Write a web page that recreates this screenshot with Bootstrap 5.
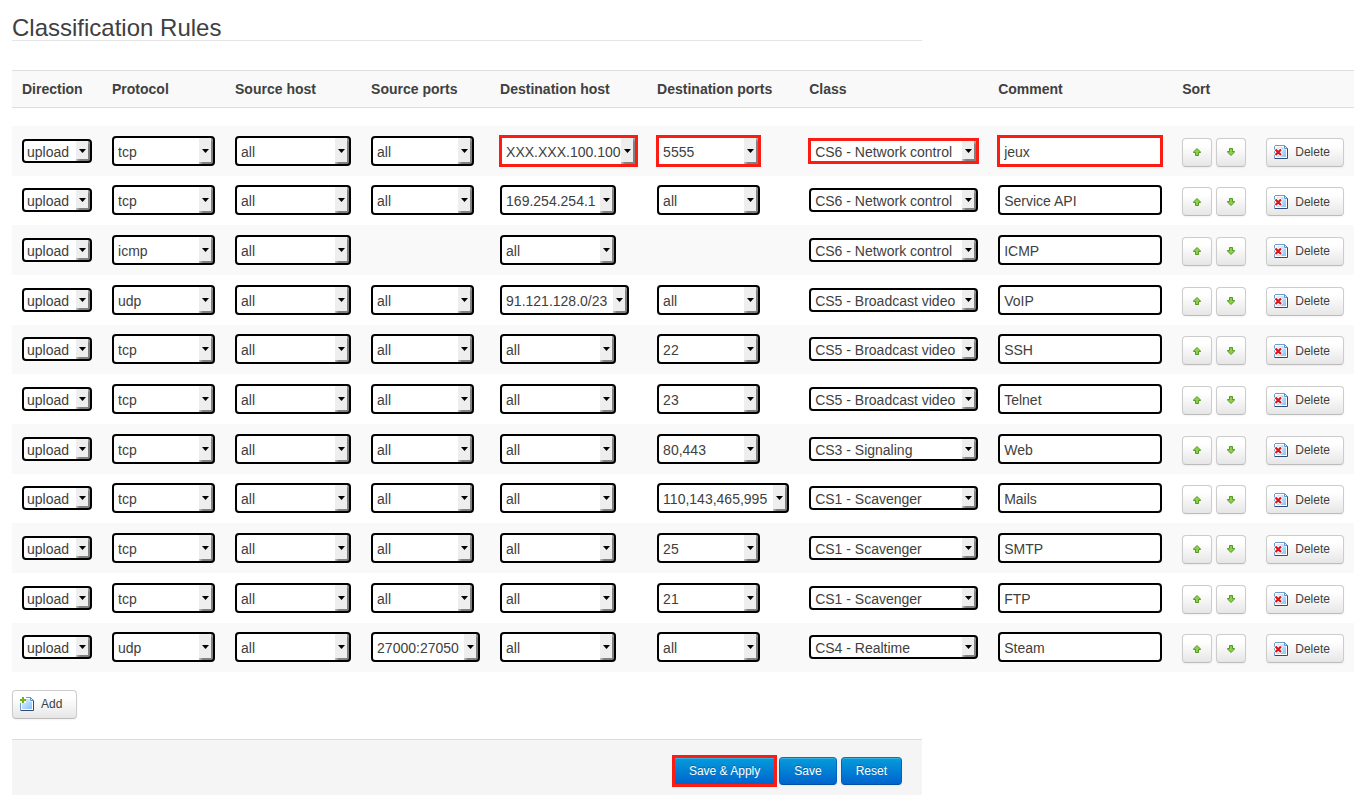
<!DOCTYPE html>
<html lang="en">
<head>
<meta charset="utf-8">
<meta name="viewport" content="width=device-width, initial-scale=1">
<title>Classification Rules</title>
<link href="https://cdn.jsdelivr.net/npm/bootstrap@5.3.0/dist/css/bootstrap.min.css" rel="stylesheet">
<style>
  body { font: 14px/18px "Liberation Sans", Arial, sans-serif; color: #404040; background: #fff; }
  main { padding: 15px 0 0 12px; }
  .section-title { font-size: 24px; line-height: 25px; font-weight: 400; margin-bottom: 29px; padding-top: 1px; margin-top: -1px; border-bottom: 1px solid #e5e5e5; }
  .form-band { max-width: 910px; }

  /* Rules table */
  .rules { font-size: 14px; line-height: 18px; color: #404040; }
  .rules th, .rules td { padding: 0 10px; text-align: left; white-space: nowrap; }
  .rules thead th { height: 37px; background: #f9f9f9; border-top: 1px solid #ddd; border-bottom: 1px solid #ddd; }
  .rules .spacer td { height: 18px; }
  .rules .rule td { height: 50px; vertical-align: middle; }
  .rules .rule:nth-child(3n) td { height: 49px; }
  .rules .rule:nth-child(even) td { background: #f9f9f9; }
  .rules .rule .actions { padding-top: 3px; }

  /* Controls */
  .field { display: block; height: 30px; margin: 0; padding: 2px 4px 0; border: 2px solid #000; border-radius: 4px; color: #404040; background-color: #fff; font: inherit; outline: 0; }
  select.field {
    appearance: none; padding-right: 14px;
    background-image:
      url("data:image/svg+xml,%3Csvg xmlns='http://www.w3.org/2000/svg' width='7' height='4'%3E%3Cpath d='M0 0h7L3.500 4z'/%3E%3C/svg%3E"),
      linear-gradient(#b4b4b4, #808080 4px),
      linear-gradient(to right, #c4c4c4, #808080 4px),
      linear-gradient(#eee, #eee);
    background-size: 7px 4px, 2px 100%, 14px 2px, 14px 100%;
    background-position: right 4px center, right top, right bottom, right top;
    background-repeat: no-repeat;
  }
  .f-dir, .f-class { height: 24px; }
  select.f-dir { width: 70px; padding-left: 3px; }
  .f-class { width: 169px; }
  .f-proto, .f-port { width: 103px; }
  .f-host { width: 116px; }
  .f-comment { width: 164px; }
  .fit-range { width: 109px; }
  .fit-net { width: 129px; }
  .fit-list { width: 132px; }
  .fit-addr { width: 137px; }
  .marked { outline: 3px solid #fb1c14; outline-offset: -2px; border-radius: 0; }

  /* Buttons */
  .btn { --bs-btn-font-size: 12px; --bs-btn-line-height: 18px; --bs-btn-border-radius: 4px; }
  .btn-tool { --bs-btn-color: #404040; --bs-btn-hover-color: #404040; height: 29px; padding: 0 13px 0 7px; gap: 7px; border: 1px solid #ccc; border-bottom-color: #bbb; background: linear-gradient(#fff 25%, #e6e6e6); box-shadow: inset 0 1px 0 #fff, 0 1px 2px rgba(0,0,0,.05); }
  .btn-sort { width: 30px; padding: 0; }
  .btn-add { margin-top: 18px; padding-right: 14px; }
  .btn-act { --bs-btn-color: #fff; --bs-btn-hover-color: #fff; height: 28px; padding: 0 14px; border: 1px solid; border-color: #0078c0 #0064c0 #004fa8; background: linear-gradient(#049cdb, #0064cd); text-shadow: 0 -1px 0 rgba(0,0,0,.25); box-shadow: inset 0 1px 0 rgba(255,255,255,.2), 0 1px 2px rgba(0,0,0,.05); }
  .btn-act.marked { outline-offset: -1px; border-radius: 0; }
  .page-actions { margin-top: 20px; padding: 17px 20px 10px; background: #f5f5f5; border-top: 1px solid #ddd; }
</style>
</head>
<body>
<svg class="position-absolute" width="0" height="0" aria-hidden="true">
  <defs>
    <linearGradient id="sheet" x1="0" y1="0" x2="1" y2="1"><stop offset="0" stop-color="#e4f2ff"/><stop offset="1" stop-color="#86c2fb"/></linearGradient>
  </defs>
  <symbol id="i-page" viewBox="0 0 14 14">
    <path d="M.5.5h10l3 3v10H.5z" fill="#fff"/>
    <path d="M1 .5h9.500M.5 1v12" stroke="#6f9cc9" fill="none"/>
    <path d="M2 2h7.500v2.500H12V12H2z" fill="url(#sheet)"/>
    <path d="M10.500.5v3h3z" stroke="#5c93cd" fill="#dceeff"/>
    <path d="M13.500 3.500v10H.5" stroke="#2f4a78" fill="none"/>
  </symbol>
  <symbol id="i-delete" viewBox="0 0 14 14">
    <use href="#i-page"/>
    <path d="M1 4l6.500 6.500M7.500 4L1 10.500" stroke="#fff" stroke-width="4"/>
    <path d="M1.500 4.500l5.500 5.500M7 4.500L1.500 10" stroke="#dc1414" stroke-width="2.200"/>
  </symbol>
  <symbol id="i-add" viewBox="0 0 14 14">
    <use href="#i-page"/>
    <path d="M0 0h6v6H0z" fill="#fff"/>
    <path d="M3 0v6M0 3h6" stroke="#6eb41e" stroke-width="2"/>
  </symbol>
  <symbol id="i-up" viewBox="0 0 8 8">
    <path d="M4 .5L7.500 4v.5h-2v3h-3v-3h-2V4z" fill="#8fce4a" stroke="#4f9a1f"/>
  </symbol>
</svg>

<main>
  <h1 class="section-title form-band">Classification Rules</h1>

  <form>
    <table class="rules w-100">
      <thead>
        <tr>
          <th scope="col" id="h-dir">Direction</th>
          <th scope="col" id="h-proto">Protocol</th>
          <th scope="col" id="h-shost">Source host</th>
          <th scope="col" id="h-sport">Source ports</th>
          <th scope="col" id="h-dhost">Destination host</th>
          <th scope="col" id="h-dport">Destination ports</th>
          <th scope="col" id="h-class">Class</th>
          <th scope="col" id="h-comment">Comment</th>
          <th scope="col">Sort</th>
          <th></th>
        </tr>
      </thead>
      <tbody id="rules">
        <tr class="spacer"><td colspan="10"></td></tr>
      </tbody>
    </table>

    <button type="button" class="btn btn-tool btn-add d-inline-flex align-items-center" id="add">
      <svg width="14" height="14" aria-hidden="true"><use href="#i-add"/></svg>Add
    </button>

    <div class="page-actions form-band d-flex justify-content-end gap-1">
      <button type="submit" class="btn btn-act marked">Save &amp; Apply</button>
      <button type="submit" class="btn btn-act">Save</button>
      <button type="reset" class="btn btn-act">Reset</button>
    </div>
  </form>
</main>

<script src="https://cdn.jsdelivr.net/npm/bootstrap@5.3.0/dist/js/bootstrap.bundle.min.js"></script>
<script>
  // protocol, source host, source ports, destination host, destination ports, class, comment, highlighted
  const rules = [
    ['tcp', 'all', 'all', 'XXX.XXX.100.100', '5555', 'CS6 - Network control', 'jeux', true],
    ['tcp', 'all', 'all', '169.254.254.1', 'all', 'CS6 - Network control', 'Service API'],
    ['icmp', 'all', null, 'all', null, 'CS6 - Network control', 'ICMP'],
    ['udp', 'all', 'all', '91.121.128.0/23', 'all', 'CS5 - Broadcast video', 'VoIP'],
    ['tcp', 'all', 'all', 'all', '22', 'CS5 - Broadcast video', 'SSH'],
    ['tcp', 'all', 'all', 'all', '23', 'CS5 - Broadcast video', 'Telnet'],
    ['tcp', 'all', 'all', 'all', '80,443', 'CS3 - Signaling', 'Web'],
    ['tcp', 'all', 'all', 'all', '110,143,465,995', 'CS1 - Scavenger', 'Mails'],
    ['tcp', 'all', 'all', 'all', '25', 'CS1 - Scavenger', 'SMTP'],
    ['tcp', 'all', 'all', 'all', '21', 'CS1 - Scavenger', 'FTP'],
    ['udp', 'all', '27000:27050', 'all', 'all', 'CS4 - Realtime', 'Steam']
  ];
  // values too long for the standard control width
  const fit = {
    'XXX.XXX.100.100': 'fit-addr', '91.121.128.0/23': 'fit-net',
    '110,143,465,995': 'fit-list', '27000:27050': 'fit-range'
  };
  const pick = (head, kind, value, mark) => value === null ? '<td></td>' :
    `<td><select class="field ${kind} ${fit[value] || ''} ${mark ? 'marked' : ''}" aria-labelledby="${head}"><option>${value}</option></select></td>`;

  document.getElementById('rules').insertAdjacentHTML('beforeend', rules.map(
    ([proto, shost, sport, dhost, dport, cls, comment, mark]) => `
    <tr class="rule">
      ${pick('h-dir', 'f-dir', 'upload')}
      ${pick('h-proto', 'f-proto', proto)}
      ${pick('h-shost', 'f-host', shost)}
      ${pick('h-sport', 'f-port', sport)}
      ${pick('h-dhost', 'f-host', dhost, mark)}
      ${pick('h-dport', 'f-port', dport, mark)}
      ${pick('h-class', 'f-class', cls, mark)}
      <td><input type="text" class="field f-comment ${mark ? 'marked' : ''}" aria-labelledby="h-comment" value="${comment}"></td>
      <td class="actions"><div class="d-flex gap-1">
        <button type="button" class="btn btn-tool btn-sort d-inline-flex align-items-center justify-content-center" aria-label="Move up"><svg width="8" height="8" aria-hidden="true"><use href="#i-up"/></svg></button>
        <button type="button" class="btn btn-tool btn-sort d-inline-flex align-items-center justify-content-center" aria-label="Move down"><svg width="8" height="8" aria-hidden="true"><use href="#i-up" transform="rotate(180 4 4)"/></svg></button>
      </div></td>
      <td class="actions"><button type="button" class="btn btn-tool d-flex align-items-center"><svg width="14" height="14" aria-hidden="true"><use href="#i-delete"/></svg>Delete</button></td>
    </tr>`).join(''));
</script>
</body>
</html>
